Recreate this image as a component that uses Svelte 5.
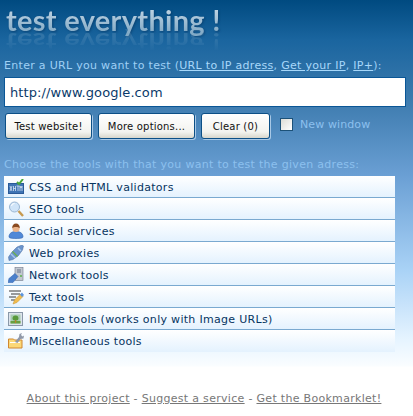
<script>
  const tools = [
    { key: 'validators', label: 'CSS and HTML validators' },
    { key: 'seo', label: 'SEO tools' },
    { key: 'social', label: 'Social services' },
    { key: 'proxies', label: 'Web proxies' },
    { key: 'network', label: 'Network tools' },
    { key: 'text', label: 'Text tools' },
    { key: 'image', label: 'Image tools (works only with Image URLs)' },
    { key: 'misc', label: 'Miscellaneous tools' }
  ];
</script>

<div class="page">
  <header class="logo">
    <h1>test everything !</h1>
    <span class="mirror" aria-hidden="true">test everything !</span>
  </header>

  <p class="hint">
    Enter a URL you want to test (<a href="#ip">URL to IP adress</a>, <a href="#your">Get your IP</a>, <a href="#plus">IP+</a>):
  </p>
  <input class="url" type="text" value="http://www.google.com" />

  <div class="actions">
    <button>Test website!</button>
    <button>More options...</button>
    <button class="clear">Clear (0)</button>
    <label class="new-window"><input type="checkbox" /><span>New window</span></label>
  </div>

  <p class="choose">Choose the tools with that you want to test the given adress:</p>

  <ul class="tools">
    {#each tools as t (t.key)}
      <li>
        <svg viewBox="0 0 16 16" width="16" height="16">
          {#if t.key === 'validators'}
            <rect x="0.500" y="4.500" width="15" height="10" fill="#3f74b4" stroke="#2a5a98" />
            <path d="M2 7l2 5M4 7l-2 5M5.500 7v5M7.500 7v5M5.500 9.500h2M8.500 7h3M10 7v5M12 12V7M14 12V7M12 7l1 2 1-2" stroke="#e8f0fa" fill="none" stroke-width=".7" />
            <path d="M9 3l2 2 4-5" stroke="#4aa63a" fill="none" stroke-width="2" />
          {:else if t.key === 'seo'}
            <circle cx="6.500" cy="6" r="5" fill="#cfe4f8" stroke="#9ab6d2" />
            <path d="M3.500 5a3 3 0 0 1 3-2.500" stroke="#fff" fill="none" />
            <path d="M10.500 10l4.500 5" stroke="#c79a50" stroke-width="2.400" />
          {:else if t.key === 'social'}
            <path d="M1 14c0-4 3-5.500 7-5.500s7 1.500 7 5.500c0 1-3 1.500-7 1.500S1 15 1 14z" fill="#4f88d8" stroke="#2f62ac" stroke-width=".6" />
            <circle cx="8" cy="5.500" r="3.600" fill="#eab48c" />
            <path d="M4.200 5c0-3 1.600-4.500 3.800-4.500S11.800 2 11.800 5C10 3.500 6 3.500 4.200 5z" fill="#8a4a20" />
          {:else if t.key === 'proxies'}
            <path d="M1 15.500L.5 12 4 7l5-5 5-2 1.500 1-1 4-4 5.500-5.500 4z" fill="#6a94cc" stroke="#46689c" stroke-width=".5" />
            <path d="M3 9l4 4" stroke="#a8c8ec" stroke-width="1.500" />
            <path d="M4.500 6.500l5 5" stroke="#6ab04a" stroke-width="1.300" />
            <path d="M10 3l3 3" stroke="#a8c8ec" stroke-width="1.500" />
          {:else if t.key === 'network'}
            <rect x="7" y="0.500" width="8" height="13" fill="#c2c8d0" stroke="#70788a" stroke-width=".6" />
            <path d="M9 3h4M9 5h4" stroke="#6a7488" />
            <circle cx="13" cy="9" r="1" fill="#58b048" />
            <path d="M0 15.500l1-4 6-5 3 3-5 6z" fill="#4a80cc" stroke="#2f5ea8" stroke-width=".5" />
          {:else if t.key === 'text'}
            <path d="M1 2h12M3 5h9M1 8h7M3 11h4" stroke="#3a3a3a" stroke-width="1.200" />
            <path d="M5 15l1.500-4 6-6 2.500 2.500-6 6z" fill="#f0bc50" stroke="#c89228" stroke-width=".5" />
            <path d="M12 5.500l2-2 2 2.500-2 2z" fill="#5c94dc" />
          {:else if t.key === 'image'}
            <rect x="0.500" y="1.500" width="14" height="13" fill="#dde4ec" stroke="#8a98a8" />
            <rect x="2.500" y="3.500" width="10" height="9" fill="#a8ccb0" />
            <path d="M2.500 10h10v2.500h-10z" fill="#68a040" />
            <path d="M7.500 4.500a3 3 0 0 1 3 3 2 2 0 0 1-2 2h-2a2 2 0 0 1-2-2 3 3 0 0 1 3-3z" fill="#58983a" />
            <path d="M7 9h1.200v3H7z" fill="#b8802a" />
          {:else}
            <path d="M.5 15V6h5l1 1h7.500v8z" fill="#fbd878" stroke="#d08830" />
            <path d="M2 9.500h10" stroke="#fff" />
            <path d="M7 9l4-5 .5-3 2.500-1-1 2 1.500 1.500 1.500-1-.5 3-3 .5-3 4z" fill="#9098a8" />
          {/if}
        </svg>
        <span>{t.label}</span>
      </li>
    {/each}
  </ul>

  <footer>
    <a href="#about">About this project</a> - <a href="#suggest">Suggest a service</a> - <a href="#bookmarklet">Get the Bookmarklet!</a>
  </footer>
</div>

<style>
  :global(body) {
    margin: 0;
    background: #fff;
  }
  .page {
    box-sizing: border-box;
    height: 416px;
    overflow: hidden;
    padding: 0 4px;
    font-family: "DejaVu Sans", Verdana, sans-serif;
    font-size: 11px;
    letter-spacing: 0.3px;
    background: linear-gradient(#004a80 0, #1a659f 40px, #3d7bae 100px, #6a9fd4 175px, #a9d2f6 270px, #e6f4ff 340px, #fafdff 366px, #fff 367px);
  }
  .logo {
    position: relative;
    height: 59px;
  }
  h1, .mirror {
    font-family: Lato, sans-serif;
    font-size: 29px;
    line-height: 34px;
    font-weight: 700;
    letter-spacing: 0.3px;
    white-space: nowrap;
  }
  h1 {
    margin: 0 0 0 2px;
    padding-top: 3px;
    color: transparent;
    background: linear-gradient(#bdd2e2 10px, #7fa8c4 34px);
    -webkit-background-clip: text;
    background-clip: text;
    filter: drop-shadow(1px 1px 1px rgba(0, 40, 80, 0.45));
  }
  .mirror {
    position: absolute;
    left: 2px;
    top: 25px;
    color: #8fb4d0;
    transform: scaleY(-0.8);
    opacity: 0.22;
    -webkit-mask-image: linear-gradient(to top, #000 30%, transparent 85%);
    mask-image: linear-gradient(to top, #000 30%, transparent 85%);
  }
  .hint, .choose {
    margin: 0;
    line-height: 14px;
    color: #9fd0f5;
    white-space: nowrap;
  }
  .hint a {
    color: #a8d8fa;
  }
  .url {
    display: block;
    box-sizing: border-box;
    width: 402px;
    height: 30px;
    margin-top: 4px;
    padding: 0 5px;
    border: 1px solid #0a5696;
    background: #fff;
    color: #0a3a6a;
    font-family: "DejaVu Sans", Verdana, sans-serif;
    font-size: 13px;
    letter-spacing: 0.1px;
    outline: none;
    border-radius: 0;
  }
  .actions {
    display: flex;
    align-items: flex-start;
    margin: 6px 0 0 1px;
    gap: 6px;
  }
  button {
    box-sizing: border-box;
    height: 26px;
    width: 87px;
    padding: 0;
    font-family: inherit;
    font-size: 10px;
    letter-spacing: 0.2px;
    color: #111;
    background: linear-gradient(#fff, #f3f3ef 75%, #d8d6cc);
    border: 1px solid #0c4f86;
    border-radius: 3px;
    box-shadow: 1px 1px 0 #a8c8e6;
  }
  button:nth-child(2) { width: 97px; }
  .clear { width: 69px; }
  .new-window {
    display: flex;
    align-items: center;
    gap: 7px;
    margin: 5px 0 0 4px;
    color: #8cc0ee;
    letter-spacing: 0.1px;
  }
  .new-window input {
    appearance: none;
    box-sizing: border-box;
    width: 13px;
    height: 13px;
    margin: 0;
    border: 1px solid #1c5178;
    background: linear-gradient(135deg, #dcdcd6, #fff);
  }
  .choose {
    margin-top: 19px;
    color: #8cc0ee;
  }
  .tools {
    list-style: none;
    margin: 4px 0 0;
    padding: 0;
    width: 391px;
  }
  .tools li {
    box-sizing: border-box;
    display: flex;
    align-items: center;
    gap: 5px;
    height: 22px;
    padding-left: 4px;
    color: #06345f;
    background: linear-gradient(#fff, #e4f2fe);
    border-bottom: 1px solid #7aa9d0;
  }
  .tools li span {
    padding-top: 1px;
  }
  .tools li:last-child {
    border-bottom: 0;
  }
  footer {
    width: 400px;
    margin-top: 40px;
    text-align: center;
    color: #777;
    line-height: 14px;
    white-space: nowrap;
  }
  footer a {
    color: #777;
  }
</style>
